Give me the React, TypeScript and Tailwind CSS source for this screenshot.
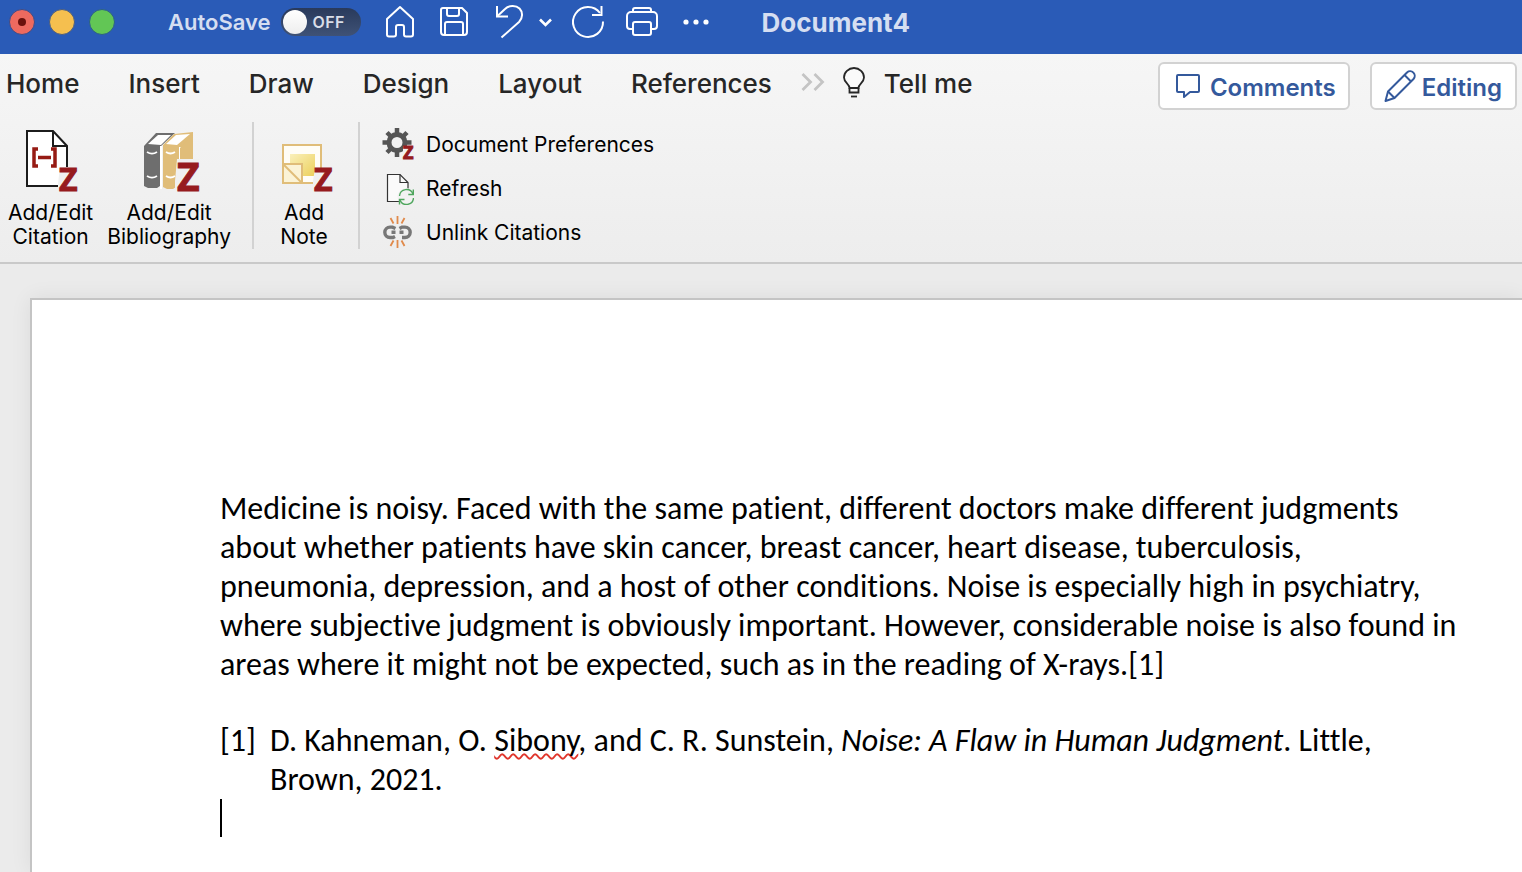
import type { ReactNode } from 'react';

const focusRing = 'focus-visible:outline-2 focus-visible:outline-sky-400';

function ZBadge({ x, y, size }: { x: number; y: number; size: number }) {
  return (
    <text x={x} y={y} fontFamily="Open Sans, sans-serif" fontWeight="700" fontSize={size} fill="#961b1e" stroke="#961b1e" strokeWidth="1">
      Z
    </text>
  );
}

function HomeIcon() {
  return (
    <svg className="h-9 w-9" viewBox="0 0 36 36" fill="none" stroke="currentColor" strokeWidth="2" strokeLinejoin="round">
      <path d="M5 15 18 3 31 15V30.500a2 2 0 0 1-2 2h-5a2 2 0 0 1-2-2V23a2 2 0 0 0-2-2h-4a2 2 0 0 0-2 2v7.500a2 2 0 0 1-2 2H7a2 2 0 0 1-2-2Z" />
    </svg>
  );
}

function SaveIcon() {
  return (
    <svg className="h-9 w-9" viewBox="0 0 36 36" fill="none" stroke="currentColor" strokeWidth="2" strokeLinejoin="round">
      <path d="M7 4H26L31 9V28a3 3 0 0 1-3 3H8a3 3 0 0 1-3-3V6a2 2 0 0 1 2-2Z" />
      <path d="M11 4v6a2 2 0 0 0 2 2h8a2 2 0 0 0 2-2V4" />
      <path d="M9 31V20a2 2 0 0 1 2-2h14a2 2 0 0 1 2 2v11" />
    </svg>
  );
}

function UndoIcon() {
  return (
    <svg className="h-9 w-9" viewBox="0 0 36 36" fill="none" stroke="currentColor" strokeWidth="2">
      <path d="M7 2v10.500h11" />
      <path d="M7.500 12 15 5C19 1 26 1 29.500 4.500S33 14 29 18L11.500 33.500" />
    </svg>
  );
}

function RedoIcon() {
  return (
    <svg className="h-9 w-9" viewBox="0 0 36 36" fill="none" stroke="currentColor" strokeWidth="2">
      <path d="M33 17.500A15 15 0 1 1 30 9" />
      <path d="M31.500 2v9H22" />
    </svg>
  );
}

function PrintIcon() {
  return (
    <svg className="h-9 w-9" viewBox="0 0 36 36" fill="none" stroke="currentColor" strokeWidth="2" strokeLinejoin="round">
      <path d="M9 8V6a2 2 0 0 1 2-2h14a2 2 0 0 1 2 2v2" />
      <path d="M9 25H6a3 3 0 0 1-3-3V12a4 4 0 0 1 4-4h22a4 4 0 0 1 4 4v10a3 3 0 0 1-3 3h-3" />
      <rect x="9" y="18" width="18" height="13" rx="2" />
    </svg>
  );
}

function BulbIcon() {
  return (
    <svg className="h-8 w-6" viewBox="0 0 24 32" fill="none" stroke="#262626" strokeWidth="1.800">
      <path fill="#fafafa" d="M7.500 21C7.500 17 2 15.500 2 10.500a10 9.500 0 0 1 20 0C22 15.500 16.500 17 16.500 21Z" />
      <path d="M7.500 21v4.500h9V21" />
      <path d="M9 29.500h6" />
    </svg>
  );
}

function CommentIcon() {
  return (
    <svg className="h-7 w-7" viewBox="0 0 28 28" fill="none" stroke="currentColor" strokeWidth="2" strokeLinejoin="round">
      <path d="M4 1h20a1 1 0 0 1 1 1v15a1 1 0 0 1-1 1H16l-6 5v-5H4a1 1 0 0 1-1-1V2a1 1 0 0 1 1-1Z" />
    </svg>
  );
}

function PencilIcon() {
  return (
    <svg className="h-8 w-8 overflow-visible" viewBox="0 0 32 32" fill="none" stroke="currentColor" strokeWidth="2" strokeLinejoin="round">
      <path d="M1.500 29 4 19.500 23 .5a4.600 4.600 0 0 1 6.500 6.500L10.500 26Z" />
      <path d="M4 19.500 10.500 26" />
      <path d="M20.500 3 27 9.500" />
    </svg>
  );
}

function CitationIcon() {
  return (
    <svg className="h-16 w-14 overflow-visible" viewBox="0 0 56 64">
      <path d="M4 2H30L44 17V57H4Z" fill="#fff" stroke="#1c1c1c" strokeWidth="2" />
      <path d="M30 2V17H44" fill="none" stroke="#1c1c1c" strokeWidth="2" />
      <path d="M15 20H11V37H15M28 20h4V37h-4" fill="none" stroke="#961b14" strokeWidth="3.500" />
      <path d="M15 28.500h13" stroke="#961b14" strokeWidth="3.500" />
      <path d="M37 38h18v26H35V55Z" fill="#f0f0f0" />
      <ZBadge x={36} y={62} size={32} />
    </svg>
  );
}

function BooksIcon() {
  return (
    <svg className="h-16 w-16 overflow-visible" viewBox="0 0 64 64">
      <path d="M7 17 19 4H38L23 18V57L20 59H11L7 57Z" fill="#6e6e6e" />
      <path d="M11 15 21 6H34L24 16Z" fill="#fff" />
      <path d="M24 17V60" stroke="#fff" strokeWidth="2" />
      <path d="M26 16 37 5 56 3V52H39V58L36 60H30L26 58Z" fill="#e0bd79" />
      <path d="M29 15 39 6 53 5 40 16Z" fill="#fff" />
      <path d="M10 23c3 2 7 2 10 0M10 47c3 2 7 2 10 0M29 23c3 2 6 2 9 0M29 47c3 2 6 2 9 0" fill="none" stroke="#fff" strokeWidth="1.800" />
      <path d="M43 18v13" stroke="#fff" strokeWidth="2" />
      <path d="M40 30h22v34H38V52Z" fill="#f0f0f0" />
      <path d="M43 19v11H56V5Z" fill="#e0bd79" />
      <ZBadge x={40} y={62} size={39} />
    </svg>
  );
}

function NoteIcon() {
  return (
    <svg className="h-16 w-14 overflow-visible" viewBox="0 0 56 64">
      <defs>
        <linearGradient id="note" x1="0" y1="0" x2="1" y2="1">
          <stop offset="0" stopColor="#faf0ba" />
          <stop offset="1" stopColor="#ecd05c" />
        </linearGradient>
      </defs>
      <rect x="7" y="16" width="38" height="38" fill="#fffdf6" stroke="#e0bd79" strokeWidth="2" />
      <rect x="14" y="25" width="25" height="22" fill="url(#note)" />
      <rect x="7" y="35" width="19" height="19" fill="#fbf3d6" stroke="#e0bd79" strokeWidth="2" />
      <path d="m7 35 19 19" stroke="#e0bd79" strokeWidth="2" />
      <path d="M39 39h17v25H37V52Z" fill="#f0f0f0" />
      <ZBadge x={38} y={62} size={32} />
    </svg>
  );
}

function GearIcon() {
  return (
    <svg className="h-8 w-8 overflow-visible" viewBox="0 0 32 32">
      <g stroke="#555" strokeWidth="4.500">
        <path d="M15 -1v29M.5 13.500h29M5 3.500l20 20M25 3.500l-20 20" />
      </g>
      <circle cx="15" cy="13.500" r="8" fill="#f1f1f1" stroke="#555" strokeWidth="5" />
      <path d="M21 17h11v15H21Z" fill="#f1f1f1" />
      <ZBadge x={21} y={30} size={18} />
    </svg>
  );
}

function RefreshIcon() {
  return (
    <svg className="h-8 w-8" viewBox="0 0 32 32" fill="none">
      <path d="M5.500 1.500H18L26 9.500V28.500H5.500Z" fill="#fafafa" stroke="#333" strokeWidth="1.200" />
      <path d="M18 1.500v8h8" stroke="#333" strokeWidth="1.200" />
      <circle cx="24.500" cy="24" r="9" fill="#f2f2f2" />
      <g stroke="#4fa65e" strokeWidth="1.400">
        <path d="M17.500 23a7 7 0 0 1 13.500-2M31.500 25a7 7 0 0 1-13.500 2" />
        <path d="M31.300 16.500V21.500h-5M17.500 31.500v-5h5" />
      </g>
    </svg>
  );
}

function UnlinkIcon() {
  return (
    <svg className="h-8 w-8 overflow-visible" viewBox="0 0 32 32" fill="none">
      <path d="M13 19.500 11 20.500H8a5.200 5.200 0 0 1 0-10.400h2.500L13.500 11.500M17.500 11.500l2.500-1.400H23a5.200 5.200 0 0 1 0 10.400h-3M9.500 15.300h4M17.500 15.300h4" stroke="#777" strokeWidth="3.400" />
      <path d="M15.500-1v8M15.500 23v8M8.500 1l3 5.500M22.500 1l-3 5.500M8.500 29l3-5.500M22.500 29l-3-5.500" stroke="#e08a4b" strokeWidth="1.800" />
    </svg>
  );
}

function TitleButton({ label, children }: { label: string; children: ReactNode }) {
  return (
    <button type="button" aria-label={label} className={`flex items-center justify-center ${focusRing}`}>
      {children}
    </button>
  );
}

function LargeButton({ icon, lines }: { icon: ReactNode; lines: string[] }) {
  return (
    <button type="button" className={`flex flex-col items-center text-[21px] leading-6 text-black ${focusRing}`}>
      <span className="mb-2">{icon}</span>
      {lines.map((line) => (
        <span key={line}>{line}</span>
      ))}
    </button>
  );
}

const tabs = ['Home', 'Insert', 'Draw', 'Design', 'Layout', 'References'];

const commands = [
  { label: 'Document Preferences', icon: <GearIcon /> },
  { label: 'Refresh', icon: <RefreshIcon /> },
  { label: 'Unlink Citations', icon: <UnlinkIcon /> },
];

function TitleBar() {
  return (
    <header className="flex h-[54px] items-center bg-[#2a5bb7] pb-2.5 pl-[9px] text-white">
      <div className="flex gap-3.5">
        <button type="button" aria-label="Close" className="flex size-[26px] items-center justify-center rounded-full border border-[#3b4c88] bg-[#ed6a5f]">
          <span className="size-2 rounded-full bg-[#6b110c]" />
        </button>
        <button type="button" aria-label="Minimize" className="size-[26px] rounded-full border border-[#4a5c80] bg-[#f5bf4f]" />
        <button type="button" aria-label="Zoom" className="size-[26px] rounded-full border border-[#2c5f85] bg-[#62c655]" />
      </div>
      <label className="ml-[53px] flex items-center gap-2.5 text-[22px] font-semibold text-[#d5def1]">
        AutoSave
        <input type="checkbox" role="switch" className="peer sr-only" />
        <span className="flex h-7 w-20 items-center gap-1.5 rounded-full bg-linear-to-b from-[#293a5c] to-[#3f5276] px-0.5 text-base tracking-wide text-[#d9dee8]">
          <span className="size-6 rounded-full bg-linear-to-b from-white to-[#eeeeee]" />
          OFF
        </span>
      </label>
      <div className="ml-[21px] flex items-center gap-[18px]">
        <TitleButton label="Home"><HomeIcon /></TitleButton>
        <TitleButton label="Save"><SaveIcon /></TitleButton>
        <div className="flex items-center gap-3">
          <TitleButton label="Undo"><UndoIcon /></TitleButton>
          <TitleButton label="Undo history">
            <svg className="size-3.5" viewBox="0 0 14 14" fill="none" stroke="currentColor" strokeWidth="2.600">
              <path d="m2 4.500 5.500 5.500 5.500-5.500" />
            </svg>
          </TitleButton>
        </div>
        <TitleButton label="Redo"><RedoIcon /></TitleButton>
        <TitleButton label="Print"><PrintIcon /></TitleButton>
        <TitleButton label="More">
          <svg className="h-9 w-9" viewBox="0 0 36 36" fill="currentColor">
            <circle cx="8" cy="18" r="2.600" />
            <circle cx="18" cy="18" r="2.600" />
            <circle cx="28" cy="18" r="2.600" />
          </svg>
        </TitleButton>
      </div>
      <h1 className="ml-12 text-[26px] font-bold text-[#d5def1]">Document4</h1>
    </header>
  );
}

function Ribbon() {
  return (
    <section className="border-b-2 border-[#c9c9c9] bg-linear-to-b from-[#f6f6f6] to-[#ededed] pb-[13px]">
      <div className="flex items-start justify-between pr-[5px] pt-2">
        <nav className="flex h-[42px] items-center gap-[49px] pl-1.5 text-[26px] font-medium text-[#262626]">
          {tabs.map((tab) => (
            <button key={tab} type="button" className={focusRing}>{tab}</button>
          ))}
          <div className="-ml-5 flex items-center gap-[17px]">
            <button type="button" aria-label="More tabs" className={focusRing}>
              <svg className="h-6 w-6" viewBox="0 0 24 24" fill="none" stroke="#c4c4c4" strokeWidth="2.800">
                <path d="m1.500 3 8 8-8 8M13.500 3l8 8-8 8" />
              </svg>
            </button>
            <button type="button" className={`flex items-center gap-[18px] ${focusRing}`}>
              <BulbIcon />
              Tell me
            </button>
          </div>
        </nav>
        <div className="flex gap-5 text-2xl font-semibold text-[#34599c]">
          <button type="button" className={`flex h-12 items-center gap-2 rounded-md border-2 border-[#d2d2d2] bg-white pl-3.5 pt-1 pr-3 ${focusRing}`}>
            <CommentIcon />
            Comments
          </button>
          <button type="button" className={`flex h-12 items-center gap-1.5 rounded-md border-2 border-[#d2d2d2] bg-white pl-3 pr-[13px] pt-1 ${focusRing}`}>
            <PencilIcon />
            Editing
          </button>
        </div>
      </div>
      <div className="mt-3 flex pl-2">
        <div className="flex items-start gap-3.5 pt-[7px] pr-[21px]">
          <LargeButton icon={<CitationIcon />} lines={['Add/Edit', 'Citation']} />
          <LargeButton icon={<BooksIcon />} lines={['Add/Edit', 'Bibliography']} />
        </div>
        <div className="flex w-27 items-start justify-center border-x-2 border-[#d2d2d2] pr-1 pt-[7px]">
          <LargeButton icon={<NoteIcon />} lines={['Add', 'Note']} />
        </div>
        <div className="flex flex-col gap-4 pl-[22px] pt-[9px]">
          {commands.map(({ label, icon }) => (
            <button key={label} type="button" className={`flex h-7 items-center gap-3 text-left text-[21px] text-black ${focusRing}`}>
              {icon}
              {label}
            </button>
          ))}
        </div>
      </div>
    </section>
  );
}

function DocumentPage() {
  return (
    <main className="flex flex-1 bg-[#ebebeb] pl-[30px] pt-[34px]">
      <article className="flex-1 border-l-2 border-t-2 border-[#c4c4c4] bg-white pl-[188px] pt-[189px] font-['Carlito','Lato',sans-serif] text-[32px] leading-[39px] text-black [font-variant-ligatures:none] shadow-[0_0_20px_rgba(0,0,0,0.07)]">
        <p className="whitespace-nowrap">
          Medicine is noisy. Faced with the same patient, different doctors make different judgments<br />
          about whether patients have skin cancer, breast cancer, heart disease, tuberculosis,<br />
          pneumonia, depression, and a host of other conditions. Noise is especially high in psychiatry,<br />
          where subjective judgment is obviously important. However, considerable noise is also found in<br />
          areas where it might not be expected, such as in the reading of X-rays.[1]
        </p>
        <div className="mt-[37px] flex whitespace-nowrap">
          <span className="w-[50px]">[1]</span>
          <p>
            D. Kahneman, O.{' '}
            <span className="underline decoration-[#e0362c] decoration-wavy decoration-2 underline-offset-2 [text-decoration-skip-ink:none]">Sibony</span>, and C. R. Sunstein,{' '}
            <em>Noise: A Flaw in Human Judgment</em>. Little,<br />
            Brown, 2021.
          </p>
        </div>
        <div className="h-[38px] w-0.5 bg-black" />
      </article>
    </main>
  );
}

export default function App() {
  return (
    <div className="flex min-h-screen flex-col overflow-hidden font-['Inter',sans-serif]">
      <TitleBar />
      <Ribbon />
      <DocumentPage />
    </div>
  );
}
